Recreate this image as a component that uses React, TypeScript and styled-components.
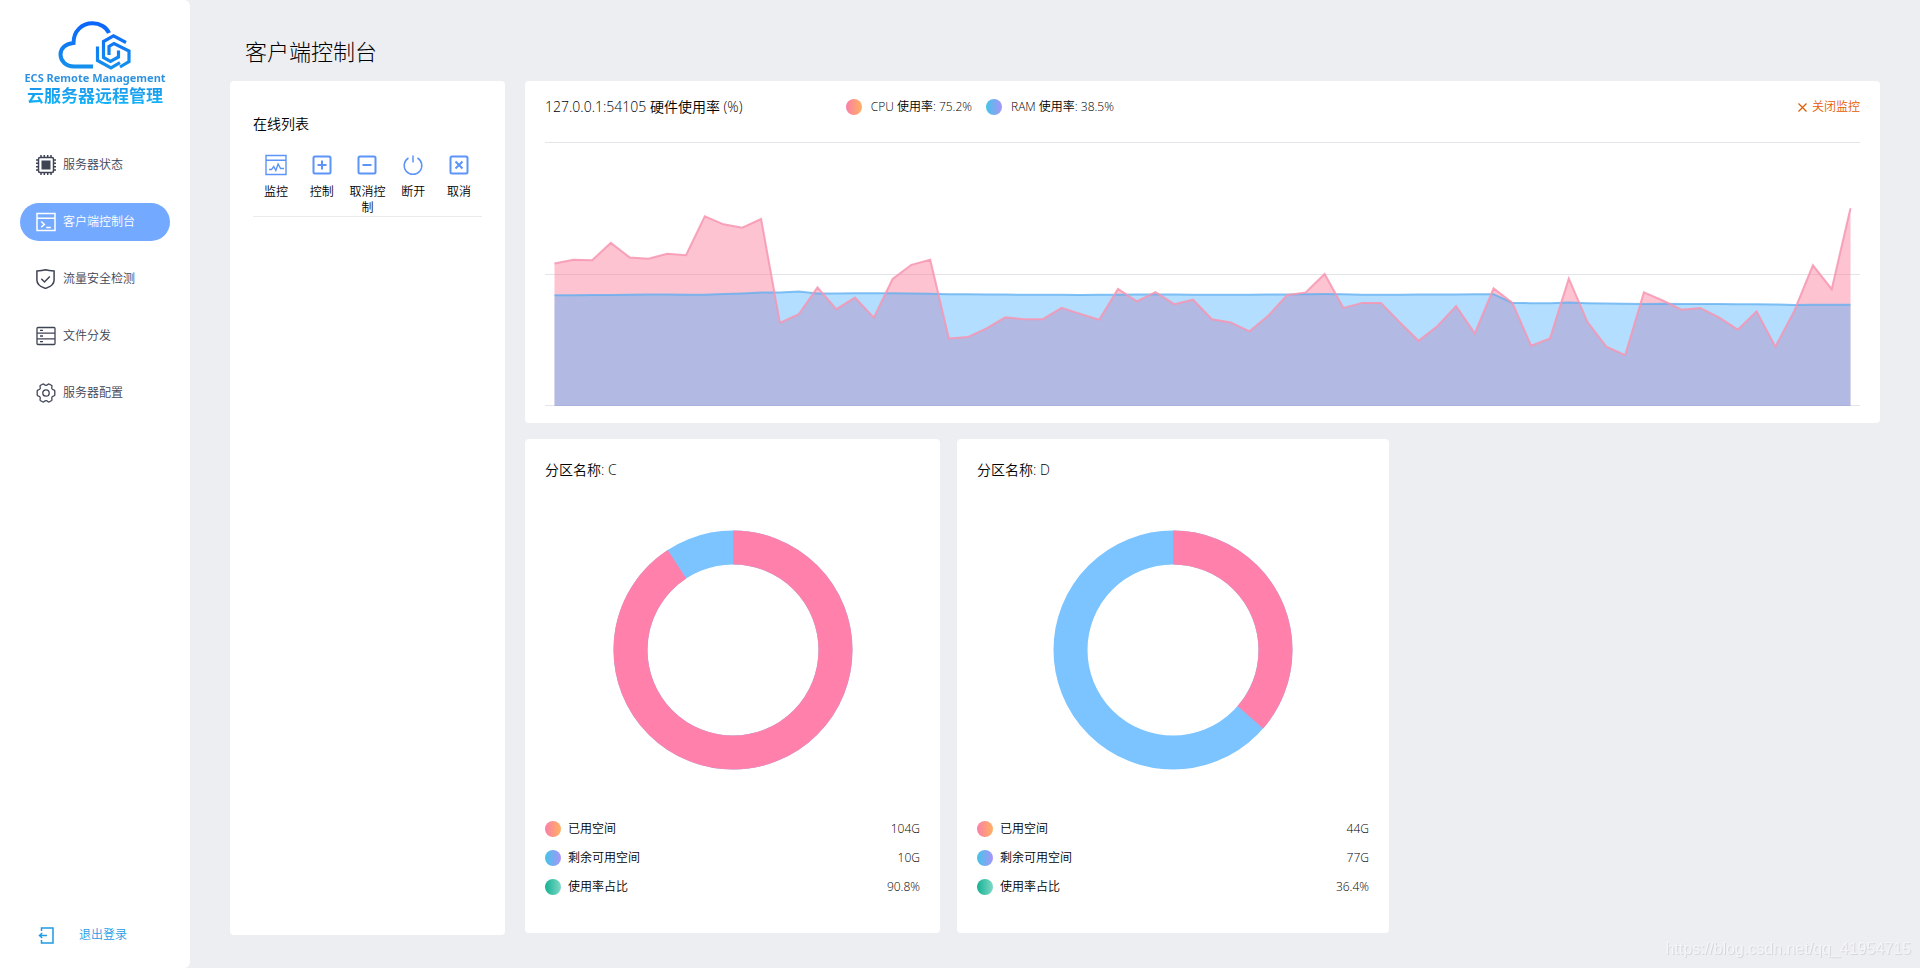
import React from "react";
import styled, { createGlobalStyle } from "styled-components";

const GlobalStyle = createGlobalStyle`
  *, *::before, *::after { box-sizing: border-box; }
  body {
    margin: 0;
    background: #edeef2;
    color: #000;
    font-family: "Open Sans", "Noto Sans CJK SC", sans-serif;
    font-size: 12px;
    font-weight: 350;
    line-height: 16px;
  }
  h1, h2, h3, p, ul, dl, dd { margin: 0; padding: 0; font-weight: 350; }
  ul { list-style: none; }
  a { color: inherit; text-decoration: none; }
  button {
    margin: 0; padding: 0; border: 0; background: none;
    color: inherit; font: inherit; cursor: pointer;
  }
  svg { display: block; flex: none; }
`;

const Page = styled.div`
  display: flex;
  min-height: 100vh;
`;

const Sidebar = styled.aside`
  display: flex;
  flex: 0 0 190px;
  flex-direction: column;
  min-width: 0;
  padding: 20px 20px 22px;
  background: #fff;
  border-radius: 0 6px 6px 0;
`;

const Brand = styled.div`
  display: flex;
  flex-direction: column;
  align-items: center;
  margin-bottom: 40px;
  white-space: nowrap;
`;

const BrandLine = styled.span<{ $size: number; $line: number; $from: string; $to: string }>`
  font-family: "Noto Sans", "Noto Sans CJK SC", sans-serif;
  font-size: ${(p) => p.$size}px;
  font-weight: 700;
  line-height: ${(p) => p.$line}px;
  color: transparent;
  background: linear-gradient(${(p) => p.$from}, ${(p) => p.$to});
  background-clip: text;
  -webkit-background-clip: text;
`;

const Nav = styled.nav`
  flex: 1;
`;

const NavList = styled.ul`
  display: flex;
  flex-direction: column;
  gap: 19px;
`;

const NavLink = styled.a<{ $active?: boolean }>`
  display: flex;
  align-items: center;
  gap: 7px;
  height: 38px;
  padding-left: 16px;
  border-radius: 19px;
  color: ${(p) => (p.$active ? "#fff" : "#3f4455")};
  background: ${(p) => (p.$active ? "#73a9ff" : "transparent")};
`;

const Logout = styled.button`
  display: flex;
  align-items: center;
  gap: 24px;
  height: 22px;
  padding-left: 18px;
  color: #1f9be4;
`;

const Main = styled.main`
  display: flex;
  flex: 1;
  flex-direction: column;
  min-width: 0;
  padding: 0 40px 33px;
`;

const PageTitle = styled.h1`
  padding: 35px 15px 14px;
  font-size: 22px;
  font-weight: 300;
  line-height: 32px;
`;

const Columns = styled.div`
  display: flex;
  flex: 1;
  gap: 20px;
`;

const Card = styled.section`
  background: #fff;
  border-radius: 4px;
`;

const ClientPanel = styled(Card)`
  flex: 0 0 275px;
  padding: 33px 23px;
`;

const CardTitle = styled.h2`
  font-size: 14px;
  line-height: 20px;
`;

const ActionRow = styled.div`
  display: grid;
  grid-template-columns: repeat(5, 1fr);
  margin-top: 20px;
  border-bottom: 1px solid #ebebee;
`;

const Action = styled.button`
  display: flex;
  flex-direction: column;
  align-items: center;
  justify-content: flex-start;
  gap: 8px;
  padding: 0 4px;
  svg { color: #5c94f7; }
`;

const Dashboard = styled.div`
  display: flex;
  flex: 1;
  flex-direction: column;
  gap: 16px;
  min-width: 0;
`;

const UsageCard = styled(Card)`
  padding: 16px 20px 17px;
`;

const UsageHeader = styled.header`
  display: grid;
  grid-template-columns: 24fr 76fr auto;
  align-items: center;
  height: 20px;
  margin-bottom: 25px;
`;

const Legend = styled.ul`
  display: flex;
  gap: 14px;
`;

const LegendItem = styled.li`
  display: flex;
  align-items: center;
  gap: 9px;
`;

const tones = {
  used: "linear-gradient(90deg, #fb7fa8, #ffb061)",
  free: "linear-gradient(90deg, #45c4e8, #a795f8)",
  rate: "linear-gradient(90deg, #14b293, #7fd8c6)",
};

const Dot = styled.span<{ $tone: keyof typeof tones }>`
  flex: none;
  width: 16px;
  height: 16px;
  border-radius: 50%;
  background: ${(p) => tones[p.$tone]};
`;

const CloseButton = styled.button`
  display: flex;
  align-items: center;
  gap: 5px;
  color: #e35b00;
`;

const AreaChart = styled.svg`
  width: 100%;
  height: 264px;
`;

const DiskGrid = styled.div`
  display: grid;
  grid-template-columns: 415fr 432fr 474fr;
  gap: 17px;
`;

const DiskCard = styled(Card)`
  padding: 21px 20px 38px;
`;

const Donut = styled.svg`
  margin: 50px auto 51px;
`;

const Stats = styled.dl`
  display: flex;
  flex-direction: column;
  gap: 13px;
`;

const Stat = styled.div`
  display: flex;
  justify-content: space-between;
`;

const StatName = styled.dt`
  display: flex;
  align-items: center;
  gap: 7px;
`;

const Watermark = styled.p`
  position: fixed;
  right: 9px;
  bottom: 9px;
  color: #f4f5f7;
  font-family: "Liberation Sans", sans-serif;
  font-size: 16px;
  font-weight: 400;
  line-height: 20px;
  text-shadow: 1px 1px 0 #d6d7da;
`;

const cpu = [
  54.2, 55.6, 55.4, 62, 56.5, 56, 57.9, 57.3, 72.1, 69.1, 67.8, 71.1, 31.6, 34.9,
  45.1, 36.8, 41.2, 33.6, 48.3, 53.7, 55.6, 25.7, 26.2, 29.5, 33.7, 33, 33, 37.3,
  35, 32.8, 44.5, 39.8, 43.3, 38.7, 40.4, 33, 31.8, 28.4, 34.3, 42.1, 43.2, 50.2,
  37.3, 39.2, 39.2, 31.9, 24.8, 30.3, 38, 27.6, 44.7, 39.2, 22.9, 25.7, 48.4, 31.9,
  22.6, 19.3, 43.2, 40.1, 36.6, 37.3, 33.7, 29, 36, 22.6, 36.1, 53.5, 44.4, 75.2,
];

const ram = [
  42.1, 42.1, 42.2, 42.2, 42.3, 42.4, 42.4, 42.3, 42.3, 42.6, 42.8, 43.1, 43.2, 43.5,
  42.8, 42.8, 42.9, 42.9, 42.9, 42.8, 42.7, 42.5, 42.5, 42.4, 42.4, 42.3, 42.3, 42.3,
  42.2, 42.3, 42.3, 42.4, 42.4, 42.4, 42.3, 42.3, 42.3, 42.3, 42.4, 42.4, 42.5, 42.6,
  42.5, 42.3, 42.3, 42.3, 42.4, 42.4, 42.4, 42.5, 42.5, 39.2, 39.1, 39.1, 39.3, 39.1,
  39, 38.9, 38.8, 38.9, 38.8, 38.8, 38.8, 38.7, 38.7, 38.6, 38.4, 38.5, 38.5, 38.5,
];

const CHART_W = 1315;
const BASE = 264;
const INSET = 9.5;

const toLine = (values: number[]) =>
  values
    .map((v, i) => {
      const x = INSET + (i * (CHART_W - INSET * 2)) / (values.length - 1);
      return `${x.toFixed(1)},${(BASE - v * 2.63).toFixed(1)}`;
    })
    .join(" ");

const toArea = (values: number[]) =>
  `${INSET},${BASE} ${toLine(values)} ${CHART_W - INSET},${BASE}`;

function UsageChart() {
  return (
    <AreaChart viewBox={`0 0 ${CHART_W} 264`} preserveAspectRatio="none" role="img" aria-label="硬件使用率">
      <g stroke="#e4e5e8">
        <path d={`M0 .5H${CHART_W}M0 132.5H${CHART_W}M0 263.5H${CHART_W}`} />
      </g>
      <polygon points={toArea(cpu)} fill="#fb6f91" fillOpacity=".42" />
      <polygon points={toArea(ram)} fill="#3babff" fillOpacity=".39" />
      <polyline points={toLine(ram)} fill="none" stroke="#5eaef0" strokeOpacity=".75" strokeWidth="2" />
      <polyline points={toLine(cpu)} fill="none" stroke="#f795b2" strokeOpacity=".85" strokeWidth="2" />
    </AreaChart>
  );
}

function DonutChart({ used }: { used: number }) {
  return (
    <Donut width="240" height="240" viewBox="0 0 240 240" role="img" aria-label={`使用率占比 ${used}%`}>
      <g fill="none" strokeWidth="34" transform="rotate(-90 120 120)">
        <circle cx="120" cy="120" r="102.5" stroke="#7cc4ff" />
        <circle cx="120" cy="120" r="102.5" stroke="#ff80aa" pathLength="100" strokeDasharray={`${used} 100`} />
      </g>
    </Donut>
  );
}

type IconProps = { children: React.ReactNode; size?: number };

const Icon = ({ children, size = 20 }: IconProps) => (
  <svg
    width={size}
    height={size}
    viewBox={`0 0 ${size} ${size}`}
    fill="none"
    stroke="currentColor"
    strokeWidth="1.5"
    aria-hidden="true"
  >
    {children}
  </svg>
);

const ChipIcon = () => (
  <Icon>
    <rect x="2.5" y="2.5" width="15" height="15" rx="1.5" />
    <rect x="5.5" y="5.5" width="9" height="9" fill="currentColor" stroke="none" />
    <path d="M5 0v2M8.3 0v2M11.7 0v2M15 0v2M5 18v2M8.3 18v2M11.7 18v2M15 18v2M0 5h2M0 8.3h2M0 11.7h2M0 15h2M18 5h2M18 8.3h2M18 11.7h2M18 15h2" />
  </Icon>
);

const ConsoleIcon = () => (
  <Icon>
    <path d="M1 1.5h18v17H1zM1 6.2h18M5.2 9.5l3.2 2.9-3.2 2.9M10.2 15.4h4.6" />
  </Icon>
);

const ShieldIcon = () => (
  <Icon>
    <path d="M9.5.8C6.9 1.7 3.800 1.900.9 1.900V11c0 4.700 3.800 7 8.600 8.400 4.800-1.400 8.600-3.700 8.600-8.400V1.900C15.200 1.900 12.100 1.700 9.500.8z" />
    <path d="M5.300 9.800l3.200 3.200 5.300-5.500" />
  </Icon>
);

const ServerIcon = () => (
  <Icon>
    <g strokeWidth="1.300">
      <rect x="1" y="1.500" width="18" height="17" rx="1" />
      <path d="M1 7.200h18M1 12.800h18M4 4.300h3M4 10h3M4 15.700h3" />
    </g>
  </Icon>
);

const GearIcon = () => (
  <Icon>
    <path
      strokeWidth="1.300"
      strokeLinejoin="round"
      d="M6.900 1C8 .6 8.300 2.400 10 2.400S12 .6 13.100 1l2.600 1.500c1 .8-.6 1.900.2 3.300.7 1.300 2.700.8 2.900 2v4.400c-.2 1.200-2.200.7-2.900 2-.8 1.400.8 2.500-.2 3.300L13.100 19c-1.100.4-1.400-1.400-3.100-1.400S8 19.400 6.900 19l-2.600-1.500c-1-.8.6-1.900-.2-3.300-.7-1.300-2.700-.8-2.900-2V7.800c.2-1.200 2.200-.7 2.900-2 .8-1.400-.8-2.500.2-3.300z"
    />
    <circle cx="10" cy="10" r="3.200" strokeWidth="1.300" />
  </Icon>
);

const MonitorIcon = () => (
  <Icon size={22}>
    <path strokeWidth="1.400" d="M1 1.500h20v19H1zM1 6.300h20M4 15.500h2.500l2.300-3 2 4 2.300-6.500 2.500 4.500H19" />
  </Icon>
);

const PlusIcon = () => (
  <Icon size={22}>
    <rect x="2.500" y="2.500" width="17" height="17" rx="1.500" strokeWidth="2" />
    <path strokeWidth="2" d="M6.500 11h9M11 6.500v9" />
  </Icon>
);

const MinusIcon = () => (
  <Icon size={22}>
    <rect x="2.500" y="2.500" width="17" height="17" rx="1.500" strokeWidth="2" />
    <path strokeWidth="2" d="M6.500 11h9" />
  </Icon>
);

const PowerIcon = () => (
  <Icon size={22}>
    <path d="M11 1.500v7M6.500 4A8.800 8.800 0 1 0 15.500 4" />
  </Icon>
);

const CancelIcon = () => (
  <Icon size={22}>
    <rect x="2.500" y="2.500" width="17" height="17" rx="1.500" strokeWidth="2" />
    <path strokeWidth="2" d="M7.500 7.500l7 7M14.500 7.500l-7 7" />
  </Icon>
);

const LogoutIcon = () => (
  <Icon size={17}>
    <path d="M3.500 4V1h11.500v15H3.500v-3M1.500 8.500H9M4.200 6L1.500 8.500 4.200 11" />
  </Icon>
);

const LogoMark = () => (
  <svg width="76" height="50" viewBox="0 0 76 50" fill="none" aria-hidden="true">
    <defs>
      <linearGradient id="mark" x1="0" y1="0" x2="0" y2="50" gradientUnits="userSpaceOnUse">
        <stop stopColor="#0a62fb" />
        <stop offset="1" stopColor="#1593ec" />
      </linearGradient>
    </defs>
    <g stroke="url(#mark)" strokeWidth="4">
      <path d="M36 46.500H17C9 46.500 3.500 41 3.500 34.500 3.500 28 9 23.500 16.500 23 16.500 11 25 3.300 35.500 3.300c7.500 0 14 4 16.500 9.700" />
      <g strokeWidth="3.200">
        <path d="M69 22.500L56.500 15.800 46.500 21.500V37.500L53.500 41.500 61.500 37V30.500" />
        <path d="M40.500 26.500V40.500L54 47.800 63 42.700" />
        <path d="M52 35V26.500L57 23.500 72 31V41.500L63 47" />
      </g>
    </g>
  </svg>
);

const navItems = [
  { label: "服务器状态", icon: <ChipIcon /> },
  { label: "客户端控制台", icon: <ConsoleIcon />, active: true },
  { label: "流量安全检测", icon: <ShieldIcon /> },
  { label: "文件分发", icon: <ServerIcon /> },
  { label: "服务器配置", icon: <GearIcon /> },
];

const actions = [
  { label: "监控", icon: <MonitorIcon /> },
  { label: "控制", icon: <PlusIcon /> },
  { label: "取消控制", icon: <MinusIcon /> },
  { label: "断开", icon: <PowerIcon /> },
  { label: "取消", icon: <CancelIcon /> },
];

const disks = [
  { name: "C", used: "104G", free: "10G", rate: 90.8 },
  { name: "D", used: "44G", free: "77G", rate: 36.4 },
];

export default function App() {
  return (
    <Page>
      <GlobalStyle />
      <Sidebar>
        <Brand>
          <LogoMark />
          <BrandLine $size={11} $line={16} $from="#3a86d8" $to="#1f9ae6">ECS Remote Management</BrandLine>
          <BrandLine $size={17} $line={20} $from="#1c94e8" $to="#10b6fb">云服务器远程管理</BrandLine>
        </Brand>
        <Nav>
          <NavList>
            {navItems.map((item) => (
              <li key={item.label}>
                <NavLink href="#" $active={item.active} aria-current={item.active ? "page" : undefined}>
                  {item.icon}
                  {item.label}
                </NavLink>
              </li>
            ))}
          </NavList>
        </Nav>
        <Logout type="button">
          <LogoutIcon />
          退出登录
        </Logout>
      </Sidebar>

      <Main>
        <PageTitle>客户端控制台</PageTitle>
        <Columns>
          <ClientPanel>
            <CardTitle>在线列表</CardTitle>
            <ActionRow>
              {actions.map((action) => (
                <Action type="button" key={action.label}>
                  {action.icon}
                  <span>{action.label}</span>
                </Action>
              ))}
            </ActionRow>
          </ClientPanel>

          <Dashboard>
            <UsageCard>
              <UsageHeader>
                <CardTitle>127.0.0.1:54105 硬件使用率 (%)</CardTitle>
                <Legend>
                  <LegendItem>
                    <Dot $tone="used" />
                    CPU 使用率: 75.2%
                  </LegendItem>
                  <LegendItem>
                    <Dot $tone="free" />
                    RAM 使用率: 38.5%
                  </LegendItem>
                </Legend>
                <CloseButton type="button">
                  <svg width="9" height="9" viewBox="0 0 9 9" stroke="currentColor" strokeWidth="1.200" aria-hidden="true">
                    <path d="M.5.5l8 8M8.500.5l-8 8" />
                  </svg>
                  关闭监控
                </CloseButton>
              </UsageHeader>
              <UsageChart />
            </UsageCard>

            <DiskGrid>
              {disks.map((disk) => (
                <DiskCard key={disk.name}>
                  <CardTitle>分区名称: {disk.name}</CardTitle>
                  <DonutChart used={disk.rate} />
                  <Stats>
                    <Stat>
                      <StatName><Dot $tone="used" />已用空间</StatName>
                      <dd>{disk.used}</dd>
                    </Stat>
                    <Stat>
                      <StatName><Dot $tone="free" />剩余可用空间</StatName>
                      <dd>{disk.free}</dd>
                    </Stat>
                    <Stat>
                      <StatName><Dot $tone="rate" />使用率占比</StatName>
                      <dd>{disk.rate}%</dd>
                    </Stat>
                  </Stats>
                </DiskCard>
              ))}
            </DiskGrid>
          </Dashboard>
        </Columns>
      </Main>
      <Watermark>https://blog.csdn.net/qq_41954715</Watermark>
    </Page>
  );
}
